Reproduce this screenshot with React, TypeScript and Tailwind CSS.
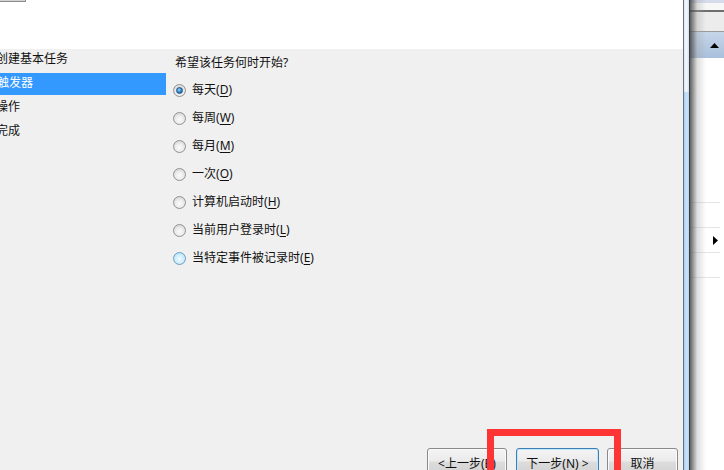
import React from "react";

type Option = {
  label: string;
  key: string;
  state: "checked" | "normal" | "hover";
};

const options: Option[] = [
  { label: "每天", key: "D", state: "checked" },
  { label: "每周", key: "W", state: "normal" },
  { label: "每月", key: "M", state: "normal" },
  { label: "一次", key: "O", state: "normal" },
  { label: "计算机启动时", key: "H", state: "normal" },
  { label: "当前用户登录时", key: "L", state: "normal" },
  { label: "当特定事件被记录时", key: "E", state: "hover" },
];

function Radio({ state }: { state: Option["state"] }) {
  if (state === "hover") {
    return (
      <span className="flex h-[13px] w-[13px] shrink-0 items-center justify-center rounded-full border border-[#6f9fc0] bg-[radial-gradient(circle_at_50%_55%,#f2fbff_0%,#cdeefd_50%,#9fd6f3_100%)]" />
    );
  }
  return (
    <span className="flex h-[13px] w-[13px] shrink-0 items-center justify-center rounded-full border border-[#939393] bg-[radial-gradient(circle_at_50%_60%,#fbfbfb_0%,#ececec_45%,#c8c8c8_100%)]">
      {state === "checked" && (
        <span className="h-[7px] w-[7px] rounded-full border border-[#1d4f7c] bg-[radial-gradient(circle_at_40%_35%,#9ad6fb_0%,#3d91d4_45%,#124a80_100%)]" />
      )}
    </span>
  );
}

function WizButton({
  children,
  width,
  primary,
}: {
  children: React.ReactNode;
  width: string;
  primary?: boolean;
}) {
  return (
    <div
      className={`flex h-[30px] shrink-0 items-center justify-center rounded-[3px] border bg-[linear-gradient(to_bottom,#f4f4f4_0%,#ebebeb_42%,#dcdcdc_48%,#cfcfcf_100%)] pt-[1px] text-[12px] leading-[16px] text-[#111] ${width} ${
        primary
          ? "border-[#3c7fb1] shadow-[inset_0_0_0_1px_#bfe6fc]"
          : "border-[#8a8a8a] shadow-[inset_0_0_0_1px_#fbfbfb]"
      }`}
    >
      {children}
    </div>
  );
}

export default function App() {
  return (
    <div className="relative flex h-[470px] w-[724px] overflow-hidden bg-white font-['Noto_Sans','Noto_Sans_CJK_SC',sans-serif] text-[12px] text-[#111]">
      {/* dialog */}
      <div className="flex w-[683px] shrink-0 flex-col">
        <div className="relative h-[49px] shrink-0 bg-white">
          <div className="absolute left-0 top-0 h-[2px] w-[26px] border-b border-r border-[#8c8c8c] bg-[#d4d4d4]" />
        </div>

        <div className="flex flex-1 bg-[#f0f0f0]">
          {/* steps */}
          <div className="flex w-[166px] shrink-0 flex-col">
            <div className="h-[21px] leading-[20px]">
              <span className="ml-[-4px]">创建基本任务</span>
            </div>
            <div className="mt-[3px] h-[22px] bg-[#3399ff] leading-[20px] text-white">
              <span className="ml-[-3px]">触发器</span>
            </div>
            <div className="h-[24px] leading-[24px]">
              <span className="ml-[-4px]">操作</span>
            </div>
            <div className="h-[24px] leading-[24px]">
              <span className="ml-[-4px]">完成</span>
            </div>
          </div>

          {/* content */}
          <div className="flex flex-1 flex-col pl-[7px]">
            <div className="ml-[2px] h-[27px] leading-[28px]">希望该任务何时开始?</div>
            <div className="flex flex-col">
              {options.map((o) => (
                <div key={o.key} className="flex h-[28px] items-center">
                  <Radio state={o.state} />
                  <span className="ml-[6px] leading-[16px]">
                    {o.label}(<span className="underline underline-offset-2">{o.key}</span>)
                  </span>
                </div>
              ))}
            </div>

            <div className="mt-auto flex h-[22px] items-start justify-end pr-[5px]">
              <WizButton width="w-[80px]">
                &lt;上一步(<span className="underline underline-offset-2">B</span>)
              </WizButton>
              <div className="w-[9px]" />
              <WizButton width="w-[83px]" primary>
                下一步(<span className="underline underline-offset-2">N</span>) &gt;
              </WizButton>
              <div className="w-[8px]" />
              <WizButton width="w-[71px]">取消</WizButton>
            </div>
          </div>
        </div>
      </div>

      {/* window frame */}
      <div className="flex w-[7px] shrink-0 flex-col border-l border-r border-l-[#66717f] border-r-[#3f3f3f]">
        <div className="h-[92px] bg-[linear-gradient(to_right,#d9e6f4,#f4f8fc,#cfe0f2)]" />
        <div className="flex-1 bg-[linear-gradient(to_right,#a8ccf1,#c9e2fa,#b4d4f5)]" />
      </div>

      {/* window behind */}
      <div className="relative flex flex-1 flex-col bg-white">
        <div className="h-[3px] bg-[#d6dbeb]" />
        <div className="h-[7px] bg-[#f7f7f7]" />
        <div className="h-[2px] bg-[#6e6e6e]" />
        <div className="h-[19px] bg-[#ececec]" />
        <div className="h-[1px] bg-[#9a9a9a]" />
        <div className="flex h-[26px] items-center justify-end bg-[linear-gradient(to_bottom,#c6d6ea,#a9bfdb)] pr-[5px]">
          <svg width="9" height="5" viewBox="0 0 9 5">
            <polygon points="0,5 4.5,0 9,5" fill="#000" />
          </svg>
        </div>
        <div className="flex flex-1 flex-col pr-[4px] pt-[144px]">
          {[0, 1, 2, 3].map((i) => (
            <div key={i} className="flex h-[25px] items-center justify-end border-t border-[#e4e4e4] pr-[2px]">
              {i === 1 && (
                <svg width="5" height="9" viewBox="0 0 5 9">
                  <polygon points="0,0 5,4.5 0,9" fill="#000" />
                </svg>
              )}
            </div>
          ))}
        </div>
        <div className="absolute bottom-0 left-0 top-0 w-[16px] bg-[linear-gradient(to_right,rgba(70,70,70,0.85),rgba(160,160,160,0.35)_45%,rgba(255,255,255,0))]" />
      </div>

      {/* red annotation */}
      <div className="absolute left-[487px] top-[429px] h-[60px] w-[134px] border-[7px] border-[#ff3535]" />
    </div>
  );
}
